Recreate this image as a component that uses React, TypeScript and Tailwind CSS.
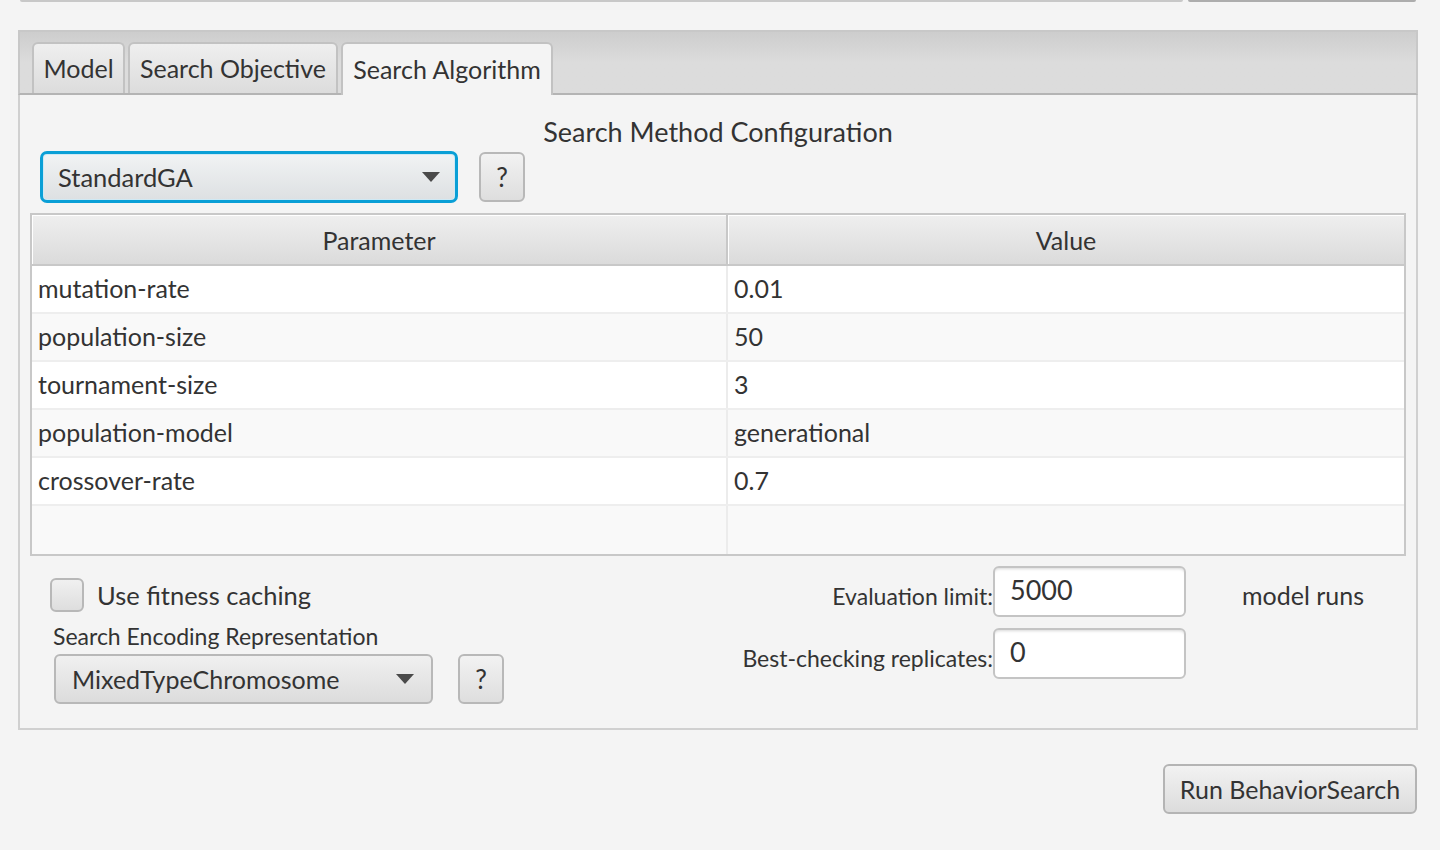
import React from "react";

const rows = [
  { name: "mutation-rate", value: "0.01" },
  { name: "population-size", value: "50" },
  { name: "tournament-size", value: "3" },
  { name: "population-model", value: "generational" },
  { name: "crossover-rate", value: "0.7" },
  { name: "", value: "" },
];

const Arrow = () => (
  <svg width="18" height="10" viewBox="0 0 18 10" className="shrink-0">
    <polygon points="0,0 18,0 9,10" fill="#4a4a4a" />
  </svg>
);

const HelpButton = () => (
  <button className="flex h-[50px] w-[46px] items-center justify-center rounded-[6px] border-2 border-[#b8b8b8] bg-gradient-to-b from-[#f2f2f2] to-[#dedede] text-[26px] text-[#333]">
    ?
  </button>
);

const Tab = ({ label, selected, width }: { label: string; selected?: boolean; width: string }) => (
  <div
    className={
      selected
        ? `relative -mb-[2px] flex h-[53px] ${width} items-center justify-center rounded-t-[6px] border-2 border-b-0 border-[#c2c2c2] bg-[#f4f4f4] text-[25px] text-[#333]`
        : `flex h-[51px] ${width} items-center justify-center rounded-t-[6px] border-2 border-b-0 border-[#c2c2c2] bg-gradient-to-b from-[#efefef] to-[#dcdcdc] text-[25px] text-[#333]`
    }
  >
    {label}
  </div>
);

export default function App() {
  return (
    <div className="min-h-screen bg-[#f4f4f4] font-['Lato',sans-serif] text-[#333]">
      {/* cut-off controls at the top edge */}
      <div className="flex h-[2px]">
        <div className="ml-[20px] w-[1163px] rounded-b-[4px] bg-[#c8c8c8]" />
        <div className="ml-[5px] w-[228px] rounded-b-[4px] bg-[#adadad]" />
      </div>

      {/* tab pane */}
      <div className="ml-[18px] mt-[28px] w-[1400px]">
        <div className="flex h-[65px] items-end gap-[3px] border-2 border-[#c8c8c8] border-b-[#b4b4b4] bg-gradient-to-b from-[#cdcdcd] via-[#dcdcdc] to-[#dcdcdc] pl-[12px]">
          <Tab label="Model" width="w-[93px]" />
          <Tab label="Search Objective" width="w-[210px]" />
          <Tab label="Search Algorithm" width="w-[212px]" selected />
        </div>

        <div className="border-2 border-t-0 border-[#d0d0d0] px-[10px] pb-[24px]">
          <div className="pt-[20px] text-center text-[27px] leading-[34px]">Search Method Configuration</div>

          <div className="ml-[10px] mt-[2px] flex items-center gap-[21px]">
            <div className="flex h-[52px] w-[418px] items-center justify-between rounded-[7px] border-[3px] border-[#0a9fd6] bg-gradient-to-b from-[#f1f3f4] to-[#dde0e2] pl-[15px] pr-[15px] text-[25.5px] shadow-[inset_0_0_0_1px_#cfe9f4]">
              <span>StandardGA</span>
              <Arrow />
            </div>
            <HelpButton />
          </div>

          {/* parameter table */}
          <div className="mt-[10px] border-2 border-[#c8c8c8] bg-white">
            <div className="grid h-[51px] grid-cols-[696px_1fr] bg-gradient-to-b from-[#efefef] to-[#dadada] text-[25px]">
              <div className="flex items-center justify-center border-r-2 border-b-2 border-[#c8c8c8] pt-[2px] shadow-[inset_1px_1px_0_#ffffff]">
                Parameter
              </div>
              <div className="flex items-center justify-center border-b-2 border-[#c8c8c8] pt-[2px] shadow-[inset_1px_1px_0_#ffffff]">
                Value
              </div>
            </div>
            {rows.map((r, i) => (
              <div
                key={i}
                className={`grid h-[48px] grid-cols-[696px_1fr] text-[25px] ${
                  i % 2 === 0 ? "bg-white" : "bg-[#f9f9f9]"
                } ${i < rows.length - 1 ? "border-b-2 border-[#eeeeee]" : ""}`}
              >
                <div className="flex items-center border-r-2 border-[#ececec] pl-[6px]">{r.name}</div>
                <div className="flex items-center pl-[6px]">{r.value}</div>
              </div>
            ))}
          </div>

          {/* options */}
          <div className="flex">
            <div className="w-[661px] pl-[20px] pt-[20px]">
              <div className="flex items-center gap-[13px]">
                <div className="h-[34px] w-[34px] rounded-[6px] border-2 border-[#b8b8b8] bg-gradient-to-b from-[#f0f0f0] to-[#dedede]" />
                <span className="text-[25.5px]">Use fitness caching</span>
              </div>
              <div className="ml-[3px] mt-[7px] text-[23px] leading-[30px]">Search Encoding Representation</div>
              <div className="ml-[4px] mt-[3px] flex items-center gap-[25px]">
                <div className="flex h-[50px] w-[379px] items-center justify-between rounded-[6px] border-2 border-[#b8b8b8] bg-gradient-to-b from-[#f0f0f0] to-[#dcdcdc] pl-[16px] pr-[17px] text-[25px]">
                  <span>MixedTypeChromosome</span>
                  <Arrow />
                </div>
                <HelpButton />
              </div>
            </div>

            <div className="grid grid-cols-[302px_193px_auto] content-start items-center gap-y-[11px] pt-[10px]">
              <div className="pt-[9px] text-right text-[23px]">Evaluation limit:</div>
              <div className="flex h-[51px] items-center rounded-[6px] border-2 border-[#c4c4c4] bg-white pb-[2px] pl-[15px] text-[27px] shadow-[inset_0_3px_3px_-2px_#d8d8d8]">
                5000
              </div>
              <div className="pl-[56px] pt-[9px] text-[25px]">model runs</div>
              <div className="pt-[9px] text-right text-[23px]">Best-checking replicates:</div>
              <div className="flex h-[51px] items-center rounded-[6px] border-2 border-[#c4c4c4] bg-white pb-[2px] pl-[15px] text-[27px] shadow-[inset_0_3px_3px_-2px_#d8d8d8]">
                0
              </div>
              <div />
            </div>
          </div>
        </div>
      </div>

      <div className="mr-[23px] mt-[34px] flex justify-end">
        <button className="flex h-[50px] w-[254px] items-center justify-center rounded-[6px] border-2 border-[#b4b4b4] bg-gradient-to-b from-[#f2f2f2] to-[#dcdcdc] text-[25px] text-[#333]">
          Run BehaviorSearch
        </button>
      </div>
    </div>
  );
}
